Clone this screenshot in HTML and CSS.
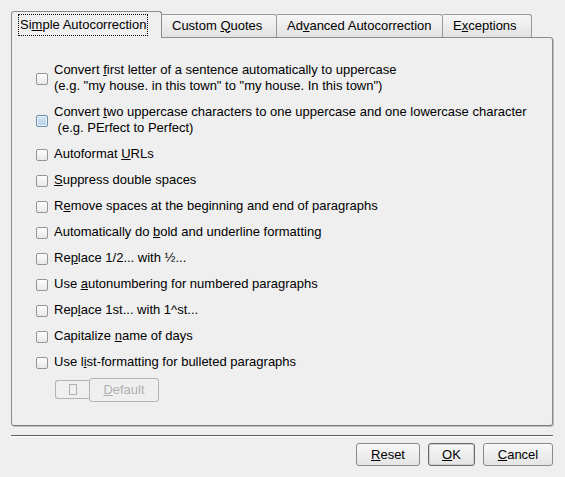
FILE: index.html
```html
<!DOCTYPE html>
<html>
<head>
<meta charset="utf-8">
<link rel="stylesheet" href="styles.css">
</head>
<body>
<div class="dialog">
  <div class="tabs">
    <div class="tab active"><span class="focus">Si<u>m</u>ple Autocorrection</span></div>
    <div class="tab t-quotes"><span>Custom <u>Q</u>uotes</span></div>
    <div class="tab t-adv"><span>Ad<u>v</u>anced Autocorrection</span></div>
    <div class="tab t-exc"><span>E<u>x</u>ceptions</span></div>
  </div>
  <div class="panel">
    <div class="options">
      <div class="row"><span class="cb"></span><span class="label">Convert <u>f</u>irst letter of a sentence automatically to uppercase<br>(e.g. "my house. in this town" to "my house. In this town")</span></div>
      <div class="row"><span class="cb hover"></span><span class="label">Convert <u>t</u>wo uppercase characters to one uppercase and one lowercase character<br>&nbsp;(e.g. PErfect to Perfect)</span></div>
      <div class="row"><span class="cb"></span><span class="label">Autoformat <u>U</u>RLs</span></div>
      <div class="row"><span class="cb"></span><span class="label"><u>S</u>uppress double spaces</span></div>
      <div class="row"><span class="cb"></span><span class="label">R<u>e</u>move spaces at the beginning and end of paragraphs</span></div>
      <div class="row"><span class="cb"></span><span class="label">Automatically do <u>b</u>old and underline formatting</span></div>
      <div class="row"><span class="cb"></span><span class="label">Re<u>p</u>lace 1/2... with ½...</span></div>
      <div class="row"><span class="cb"></span><span class="label">Use <u>a</u>utonumbering for numbered paragraphs</span></div>
      <div class="row"><span class="cb"></span><span class="label">Rep<u>l</u>ace 1st... with 1^st...</span></div>
      <div class="row"><span class="cb"></span><span class="label">Capitalize <u>n</u>ame of days</span></div>
      <div class="row"><span class="cb"></span><span class="label">Use l<u>i</u>st-formatting for bulleted paragraphs</span></div>
    </div>
    <div class="bullet-btns">
      <div class="btn disabled small"><span class="sq"></span></div>
      <div class="btn disabled deflt"><span><u>D</u>efault</span></div>
    </div>
  </div>
  <div class="sep"></div>
  <div class="footer">
    <div class="btn b-reset"><span><u>R</u>eset</span></div>
    <div class="btn b-ok"><span><u>O</u>K</span></div>
    <div class="btn b-cancel"><span><u>C</u>ancel</span></div>
  </div>
</div>
</body>
</html>
```
FILE: styles.css
```css
html, body {
  margin: 0;
  padding: 0;
  background: #efefef;
}
body {
  font-family: "Liberation Sans", Arial, sans-serif;
  font-size: 13px;
  color: #000;
  width: 565px;
  height: 477px;
  overflow: hidden;
}
u { text-decoration: underline; text-underline-offset: 1px; }
.dialog {
  padding: 11px 12px 0 11px;
}
.tabs {
  display: flex;
  align-items: flex-end;
  height: 26px;
  position: relative;
  z-index: 2;
}
.tab {
  box-sizing: border-box;
  height: 23px;
  border: 1px solid #999;
  border-bottom: none;
  border-left: none;
  border-radius: 0 3px 0 0;
  background: linear-gradient(#f6f6f6, #e2e2e2);
  display: flex;
  align-items: center;
  padding: 0 0 1px 10px;
  line-height: 16px;
  white-space: nowrap;
}
.tab.active {
  width: 151px;
  border-left: 1px solid #8c8c8c;
  border-color: #8c8c8c;
  border-radius: 3px 3px 0 0;
  background: #efefef;
  padding: 0 0 0 6px;
  margin-bottom: -1px;
  height: 27px;
}
.focus {
  border: 1px dotted #000;
  padding: 2px 1px 2px 1px;
}
.t-quotes { width: 115px; }
.t-adv { width: 166px; }
.t-exc { width: 89px; }
.panel {
  box-sizing: border-box;
  height: 389px;
  border: 1px solid #8c8c8c;
  border-right-color: #888;
  border-bottom-color: #7c7c7c;
  box-shadow: 1px 1px 0 #bdbdbd;
  border-radius: 0 3px 3px 3px;
  padding: 24px 0 0 24px;
}
.options {
  display: flex;
  flex-direction: column;
  gap: 10px;
}
.row {
  display: flex;
  align-items: center;
  gap: 6px;
}
.label {
  line-height: 16px;
}
.cb {
  box-sizing: border-box;
  width: 12px;
  height: 12px;
  flex: none;
  border: 1px solid #959595;
  border-radius: 2px;
  background: linear-gradient(#fdfdfd, #e8e8e8);
  margin-top: 1px;
}
.cb.hover {
  border-color: #6a8fb3;
  background: linear-gradient(#d6e6f4, #b8d0e6);
  box-shadow: inset 0 0 0 1px #e8f0f8;
}
.bullet-btns {
  display: flex;
  margin: 8px 0 0 19px;
}
.btn {
  box-sizing: border-box;
  height: 23px;
  border: 1px solid #8a8a8a;
  border-radius: 3px;
  background: linear-gradient(#f8f8f8, #e4e4e4);
  display: flex;
  align-items: center;
  justify-content: center;
  line-height: 16px;
}
.btn.disabled {
  border-color: #b4b4b4;
  background: #efefef;
  color: #b0b0b0;
}
.btn.small {
  width: 34px;
  height: 19px;
  margin-top: 2px;
  border-radius: 3px 0 0 3px;
  border-right: none;
}
.sq {
  width: 6px;
  height: 9px;
  border: 1px solid #b0b0b0;
}
.btn.deflt {
  width: 70px;
  height: 24px;
}
.sep {
  height: 1px;
  background: #5e5e5e;
  margin-top: 9px;
  box-shadow: 0 1px 0 #ffffff;
}
.footer {
  display: flex;
  justify-content: flex-end;
  gap: 8px;
  margin-top: 7px;
}
.b-reset { width: 64px; }
.b-ok { width: 47px; border-color: #6a6a6a; box-shadow: inset 0 0 0 1px #d0d0d0; }
.b-cancel { width: 70px; }
```
